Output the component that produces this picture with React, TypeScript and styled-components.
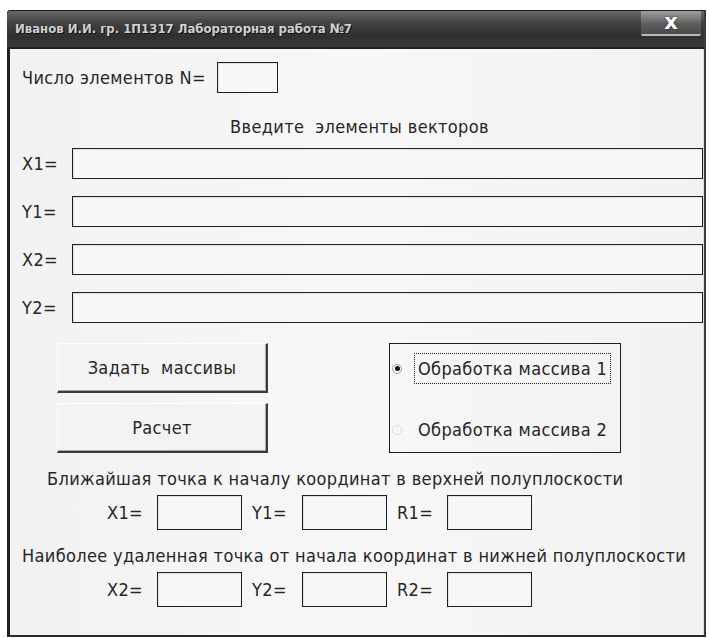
import React from 'react'
import styled, { createGlobalStyle, css } from 'styled-components'

const GlobalStyle = createGlobalStyle`
  html, body {
    margin: 0;
    padding: 0;
    background: #ffffff;
  }
  body {
    font-family: "DejaVu Sans Condensed", "DejaVu Sans", "Liberation Sans", sans-serif;
    color: #1a1a1a;
  }
`

const vectorRows = ['X1=', 'Y1=', 'X2=', 'Y2=']

const results = [
  {
    title: 'Ближайшая точка к началу координат в верхней полуплоскости',
    indent: 37,
    fields: ['X1=', 'Y1=', 'R1='],
  },
  {
    title: 'Наиболее удаленная точка от начала координат в нижней полуплоскости',
    indent: 12,
    fields: ['X2=', 'Y2=', 'R2='],
  },
]

const App = () => {
  return (
    <>
      <GlobalStyle />
      <Window>
        <TitleBar>
          <Title>Иванов И.И. гр. 1П1317 Лабораторная работа №7</Title>
          <CloseButton>x</CloseButton>
        </TitleBar>
        <Client>
          <CountRow>
            <Label>Число элементов N=</Label>
            <Box $w={61} $h={31} />
          </CountRow>

          <Heading>Введите&nbsp; элементы векторов</Heading>

          <VectorList>
            {vectorRows.map((name) => (
              <VectorRow key={name}>
                <Label>{name}</Label>
                <Box $h={31} />
              </VectorRow>
            ))}
          </VectorList>

          <Actions>
            <Buttons>
              <Button>Задать&nbsp; массивы</Button>
              <Button>Расчет</Button>
            </Buttons>
            <Group>
              <RadioRow>
                <Radio $checked />
                <RadioText $focused>Обработка массива 1</RadioText>
              </RadioRow>
              <RadioRow>
                <Radio />
                <RadioText>Обработка массива 2</RadioText>
              </RadioRow>
            </Group>
          </Actions>

          {results.map((r) => (
            <ResultBlock key={r.title}>
              <Caption $indent={r.indent}>{r.title}</Caption>
              <ResultRow>
                {r.fields.map((f) => (
                  <ResultCell key={f}>
                    <Label>{f}</Label>
                    <Box $w={85} $h={35} />
                  </ResultCell>
                ))}
              </ResultRow>
            </ResultBlock>
          ))}
        </Client>
      </Window>
    </>
  )
}

export default App

// ---------- window frame ----------

const Window = styled.div`
  margin: 10px 0 0 7px;
  width: 699px;
  height: 627px;
  box-sizing: border-box;
  border-left: 3px solid #202020;
  border-right: 2px solid #3a3a3a;
  border-bottom: 2px solid #2a2a2a;
  border-top-left-radius: 4px;
  display: flex;
  flex-direction: column;
  background: #f4f4f4;
`

const TitleBar = styled.div`
  height: 39px;
  flex-shrink: 0;
  display: flex;
  align-items: flex-start;
  justify-content: space-between;
  background: linear-gradient(#6a6a6a 0%, #444 30%, #303030 70%, #3a3a3a 100%);
  border-top: 1px solid #1a1a1a;
  border-bottom: 2px solid #1e1e1e;
  border-top-left-radius: 4px;
  margin-left: -3px;
  padding-left: 8px;
  box-sizing: border-box;
`

const Title = styled.span`
  margin-top: 10px;
  font-family: "DejaVu Sans Condensed", "DejaVu Sans", sans-serif;
  font-weight: bold;
  font-size: 13px;
  color: #d0d0d0;
  text-shadow: 1px 1px 0 #111;
  white-space: nowrap;
`

const CloseButton = styled.div`
  width: 60px;
  height: 25px;
  margin-right: 3px;
  box-sizing: border-box;
  display: flex;
  align-items: center;
  justify-content: center;
  background: linear-gradient(#a0a0a0, #5e5e5e 55%, #4a4a4a);
  border-bottom: 2px solid #b8b8b8;
  border-radius: 0 0 2px 2px;
  font-family: "DejaVu Sans", sans-serif;
  font-weight: bold;
  font-size: 21px;
  line-height: 1;
  color: #ffffff;
  text-shadow: 0 0 2px #222;
`

const Client = styled.div`
  flex: 1;
  display: flex;
  flex-direction: column;
  font-size: 18px;
  letter-spacing: 0.35px;
  background: linear-gradient(90deg, #f2f2f2, #f7f7f7 50%, #f2f2f2);
  border-right: 1px solid #dcdcdc;
`

// ---------- shared parts ----------

const Label = styled.span`
  white-space: nowrap;
  color: #262626;
`

type BoxProps = { $w?: number; $h: number }
const Box = styled.div<BoxProps>(
  (p) => css`
    ${p.$w ? `width: ${p.$w}px;` : 'flex: 1;'}
    height: ${p.$h}px;
    box-sizing: border-box;
    border: 1px solid #1e1e1e;
    background: #f7f7f7;
    box-shadow: inset 1px 1px 0 #e2e2e2;
    flex-shrink: 0;
  `
)

// ---------- input section ----------

const CountRow = styled.div`
  margin-top: 13px;
  padding-left: 12px;
  display: flex;
  align-items: center;
  gap: 11px;
`

const Heading = styled.div`
  margin-top: 24px;
  height: 20px;
  line-height: 20px;
  text-align: center;
  padding-left: 6px;
  color: #262626;
`

const VectorList = styled.div`
  margin-top: 11px;
  display: flex;
  flex-direction: column;
  gap: 17px;
`

const VectorRow = styled.div`
  display: grid;
  grid-template-columns: 50px 1fr;
  align-items: center;
  padding-left: 12px;
  & > ${Box} {
    width: 100%;
  }
`

// ---------- buttons and options ----------

const Actions = styled.div`
  margin-top: 20px;
  height: 110px;
  display: flex;
  padding-left: 47px;
  gap: 121px;
`

const Buttons = styled.div`
  width: 211px;
  display: flex;
  flex-direction: column;
  gap: 10px;
`

const Button = styled.div`
  height: 50px;
  box-sizing: border-box;
  display: flex;
  align-items: center;
  justify-content: center;
  color: #262626;
  background: #f3f3f3;
  border-top: 1px solid #ffffff;
  border-left: 1px solid #ffffff;
  border-right: 2px solid #3a3a3a;
  border-bottom: 2px solid #3a3a3a;
  box-shadow: inset -1px -1px 0 #a8a8a8;
`

const Group = styled.div`
  width: 232px;
  height: 110px;
  box-sizing: border-box;
  border: 1px solid #1e1e1e;
  display: flex;
  flex-direction: column;
  justify-content: space-between;
  padding: 9px 0 7px 2px;
`

const RadioRow = styled.div`
  display: flex;
  align-items: center;
  gap: 12px;
  height: 31px;
`

type RadioProps = { $checked?: boolean }
const Radio = styled.span<RadioProps>(
  (p) => css`
    width: 10px;
    height: 10px;
    border-radius: 50%;
    box-sizing: border-box;
    border: 1px solid ${p.$checked ? '#a0a0a0' : '#d8d8d8'};
    display: flex;
    align-items: center;
    justify-content: center;
    flex-shrink: 0;
    &::after {
      content: '';
      width: 5px;
      height: 5px;
      border-radius: 50%;
      background: ${p.$checked ? '#111' : 'transparent'};
    }
  `
)

type RadioTextProps = { $focused?: boolean }
const RadioText = styled.span<RadioTextProps>(
  (p) => css`
    height: 31px;
    line-height: 29px;
    box-sizing: border-box;
    padding: 0 3px;
    white-space: nowrap;
    color: #262626;
    border: 1px dotted ${p.$focused ? '#222' : 'transparent'};
  `
)

// ---------- results ----------

const ResultBlock = styled.div`
  margin-top: 16px;
  &:first-of-type {
    margin-top: 25px;
  }
`

type CaptionProps = { $indent: number }
const Caption = styled.div<CaptionProps>(
  (p) => css`
    height: 20px;
    line-height: 20px;
    padding-left: ${p.$indent}px;
    white-space: nowrap;
    color: #262626;
  `
)

const ResultRow = styled.div`
  margin-top: 6px;
  padding-left: 97px;
  display: flex;
  gap: 10px;
`

const ResultCell = styled.div`
  width: 135px;
  display: grid;
  grid-template-columns: 50px 85px;
  align-items: center;
`
